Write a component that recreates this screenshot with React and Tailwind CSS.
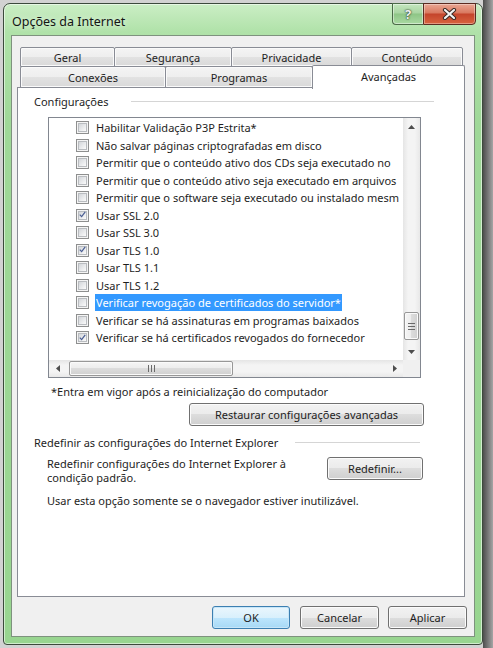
const ITEMS = [
  { label: 'Habilitar Validação P3P Estrita*' },
  { label: 'Não salvar páginas criptografadas em disco' },
  { label: 'Permitir que o conteúdo ativo dos CDs seja executado no' },
  { label: 'Permitir que o conteúdo ativo seja executado em arquivos' },
  { label: 'Permitir que o software seja executado ou instalado mesm' },
  { label: 'Usar SSL 2.0', checked: true },
  { label: 'Usar SSL 3.0' },
  { label: 'Usar TLS 1.0', checked: true },
  { label: 'Usar TLS 1.1' },
  { label: 'Usar TLS 1.2' },
  { label: 'Verificar revogação de certificados do servidor*', selected: true },
  { label: 'Verificar se há assinaturas em programas baixados' },
  { label: 'Verificar se há certificados revogados do fornecedor', checked: true },
]

const BTN = 'h-[23px] rounded-[3px] border border-[#707070] bg-[linear-gradient(#f2f2f2_0%,#ebebeb_50%,#dddddd_50%,#cfcfcf_100%)] shadow-[inset_0_0_0_1px_#fbfbfb] flex items-center justify-center text-[#1e1e1e]'
const TAB = 'border border-[#898c95] rounded-t-[2px] bg-[linear-gradient(#f4f4f4_0%,#eeeeee_50%,#e2e2e2_50%,#d9d9d9_100%)] shadow-[inset_0_0_0_1px_#fafafa] flex items-center justify-center text-[#1e1e1e]'

function Checkbox({ checked }) {
  return (
    <div className="w-[13px] h-[13px] shrink-0 border border-[#8e8f8f] bg-[#f4f4f4] p-[1px]">
      <div className="w-full h-full border border-[#b9bcc0] bg-gradient-to-br from-[#d3d6da] to-[#fbfbfb] flex items-center justify-center">
        {checked && (
          <svg width="9" height="9" viewBox="0 0 9 9" className="-mt-px">
            <path d="M1 4.6 L3.4 7.2 L8 1.2" fill="none" stroke="#4a5e93" strokeWidth="1.6" />
          </svg>
        )}
      </div>
    </div>
  )
}

function Arrow({ dir }) {
  const pts = {
    up: '0,4 3.5,0 7,4',
    down: '0,0 7,0 3.5,4',
    left: '4,0 4,7 0,3.5',
    right: '0,0 4,3.5 0,7',
  }[dir]
  const vertical = dir === 'up' || dir === 'down'
  return (
    <svg width={vertical ? 7 : 4} height={vertical ? 4 : 7}>
      <polygon points={pts} fill="#4d4d4d" />
    </svg>
  )
}

function GroupHeader({ title, lineClass }) {
  return (
    <div className="flex items-center h-[14px] pl-[16px]">
      <span className="text-[#1e1e1e] whitespace-nowrap">{title}</span>
      <div className={`flex-1 h-px bg-[#d5d5d5] ${lineClass}`} />
    </div>
  )
}

function ListBox() {
  return (
    <div className="ml-[30px] mt-[9px] w-[373px] h-[261px] border border-[#828790] flex flex-col bg-white">
      <div className="flex flex-1 min-h-0">
        <div className="flex-1 overflow-hidden pt-[1px]">
          {ITEMS.map(item => (
            <div key={item.label} className="h-[17.5px] flex items-center pl-[27px] whitespace-nowrap">
              <Checkbox checked={item.checked} />
              <span className={`ml-[6px] px-[1px] h-[17px] flex items-center ${item.selected ? 'bg-[#3399ff] text-white' : 'text-[#1e1e1e]'}`}>
                {item.label}
              </span>
            </div>
          ))}
        </div>

        {/* vertical scrollbar */}
        <div className="w-[17px] flex flex-col bg-[linear-gradient(90deg,#e5e5e5,#f4f4f4_30%,#f4f4f4_70%,#e8e8e8)]">
          <div className="h-[17px] flex items-center justify-center"><Arrow dir="up" /></div>
          <div className="flex-1 flex flex-col justify-end items-center pb-[3px]">
            <div className="w-[15px] h-[28px] rounded-[2px] border border-[#979797] bg-[linear-gradient(90deg,#f5f5f5,#ececec_50%,#dcdcdc_50%,#d0d0d0)] shadow-[inset_0_0_0_1px_#fafafa] flex flex-col items-center justify-center gap-[2px]">
              <div className="w-[7px] h-px bg-[#6a6a6a]" />
              <div className="w-[7px] h-px bg-[#6a6a6a]" />
              <div className="w-[7px] h-px bg-[#6a6a6a]" />
            </div>
          </div>
          <div className="h-[17px] flex items-center justify-center"><Arrow dir="down" /></div>
        </div>
      </div>

      {/* horizontal scrollbar */}
      <div className="flex h-[17px]">
        <div className="flex-1 flex items-center bg-[linear-gradient(#e5e5e5,#f4f4f4_30%,#f4f4f4_70%,#e8e8e8)]">
          <div className="w-[17px] h-full flex items-center justify-center"><Arrow dir="left" /></div>
          <div className="ml-[3px] w-[164px] h-[15px] rounded-[2px] border border-[#979797] bg-[linear-gradient(#f5f5f5,#ececec_50%,#dcdcdc_50%,#d0d0d0)] shadow-[inset_0_0_0_1px_#fafafa] flex items-center justify-center gap-[2px]">
            <div className="h-[7px] w-px bg-[#6a6a6a]" />
            <div className="h-[7px] w-px bg-[#6a6a6a]" />
            <div className="h-[7px] w-px bg-[#6a6a6a]" />
          </div>
          <div className="flex-1" />
          <div className="w-[17px] h-full flex items-center justify-center"><Arrow dir="right" /></div>
        </div>
        <div className="w-[17px] bg-[#f0f0f0]" />
      </div>
    </div>
  )
}

function TitleBar() {
  return (
    <div className="h-[31px] flex items-start justify-between pl-[8px] pr-[6px]">
      <span className="mt-[12px] text-[12.5px] text-[#141414] [text-shadow:0_0_6px_rgba(255,255,255,0.9)]">Opções da Internet</span>
      <div className="flex -mt-px">
        <div className="w-[31px] h-[22px] rounded-bl-[4px] border border-[#4c6a48] border-r-0 bg-[linear-gradient(#c4e6be,#a9d5a2_45%,#8ec586_50%,#a9d9a2)] shadow-[inset_0_0_0_1px_rgba(255,255,255,0.45)] flex items-center justify-center">
          <span className="text-[13px] font-bold text-[#f2f2f2] [text-shadow:0_0_2px_#223322,0_0_1px_#223322]">?</span>
        </div>
        <div className="w-[53px] h-[22px] rounded-br-[4px] border border-[#5b2b21] bg-[linear-gradient(#e9a794,#d9785f_45%,#c4442b_50%,#d8633f)] shadow-[inset_0_0_0_1px_rgba(255,255,255,0.35)] flex items-center justify-center">
          <svg width="15" height="12" viewBox="0 0 15 12">
            <path d="M3 2 L12 10 M12 2 L3 10" stroke="#3a2a26" strokeWidth="4.2" strokeLinecap="round" />
            <path d="M3 2 L12 10 M12 2 L3 10" stroke="#f4f4f4" strokeWidth="2.2" strokeLinecap="round" />
          </svg>
        </div>
      </div>
    </div>
  )
}

export default function App() {
  return (
    <div className="w-[493px] h-[648px] flex bg-[#d2d2d2] overflow-hidden font-['Noto_Sans',sans-serif] text-[11px] leading-none">
      <div className="pl-[3px] pt-[3px]">
        {/* Window frame */}
        <div className="w-[480px] h-[642px] rounded-t-[7px] rounded-b-[4px] border border-[#3c4a3c] bg-[linear-gradient(180deg,#cbeec5_0px,#b0e2a9_28px,#9fd898_120px,#98d590_100%)] shadow-[inset_0_0_0_1px_rgba(255,255,255,0.55)] flex flex-col">
          <TitleBar />

          {/* Client area */}
          <div className="mx-[7px] h-[602px] border border-[#7e927e] bg-[#f0f0f0] flex flex-col pl-[5px] pr-[7px] pt-[11px]">
            {/* Tabs */}
            <div className="pl-[3px] flex flex-col">
              <div className="flex h-[20px]">
                <div className={`${TAB} w-[95px]`}>Geral</div>
                <div className={`${TAB} w-[118px] -ml-px`}>Segurança</div>
                <div className={`${TAB} w-[121px] -ml-px`}>Privacidade</div>
                <div className={`${TAB} w-[112px] -ml-px`}>Conteúdo</div>
              </div>
              <div className="flex h-[22px] -mt-px items-end">
                <div className={`${TAB} w-[146px] h-[22px] pt-px`}>Conexões</div>
                <div className={`${TAB} w-[148px] h-[22px] -ml-px pt-px`}>Programas</div>
                <div className="relative z-10 w-[153px] h-[24px] -ml-px -mb-px border border-b-0 border-[#898c95] rounded-t-[2px] bg-white flex justify-center pt-[5px] text-[#1e1e1e]">
                  Avançadas
                </div>
              </div>
            </div>

            {/* Tab panel */}
            <div className="-mt-px w-[448px] h-[510px] border border-[#898c95] bg-white flex flex-col">
              <div className="mt-[6px]">
                <GroupHeader title="Configurações" lineClass="ml-[22px] mr-[30px]" />
              </div>

              <ListBox />

              <div className="ml-[33px] mt-[6px] h-[14px] flex items-center text-[#1e1e1e]">
                *Entra em vigor após a reinicialização do computador
              </div>

              <div className={`${BTN} ml-[171px] mt-[5px] w-[235px]`}>Restaurar configurações avançadas</div>

              <div className="mt-[9px]">
                <GroupHeader title="Redefinir as configurações do Internet Explorer" lineClass="ml-[17px] mr-[44px]" />
              </div>

              <div className="mt-[7px] flex items-start">
                <div className="ml-[29px] flex flex-col text-[#1e1e1e]">
                  <span className="h-[14px] flex items-center">Redefinir configurações do Internet Explorer à</span>
                  <span className="h-[14px] flex items-center">condição padrão.</span>
                </div>
                <div className="flex-1" />
                <div className={`${BTN} mt-px mr-[41px] w-[96px] h-[22px]`}>Redefinir...</div>
              </div>

              <div className="ml-[29px] mt-[9px] h-[14px] flex items-center text-[#1e1e1e]">
                Usar esta opção somente se o navegador estiver inutilizável.
              </div>
            </div>

            {/* Dialog buttons */}
            <div className="mt-[9px] flex justify-end">
              <div className="w-[78px] h-[23px] rounded-[3px] border border-[#3c7fb1] bg-[linear-gradient(#eaf6fd_0%,#d9f0fc_50%,#bee6fd_50%,#a7d9f5_100%)] shadow-[inset_0_0_0_1px_#c7e6f8] flex items-center justify-center text-[#1e1e1e]">OK</div>
              <div className={`${BTN} ml-[10px] w-[79px]`}>Cancelar</div>
              <div className={`${BTN} ml-[9px] w-[79px]`}>Aplicar</div>
            </div>
          </div>
        </div>
      </div>
      <div className="flex-1 bg-gradient-to-r from-[#4e4e4e] to-[#a5a5a5]" />
    </div>
  )
}
